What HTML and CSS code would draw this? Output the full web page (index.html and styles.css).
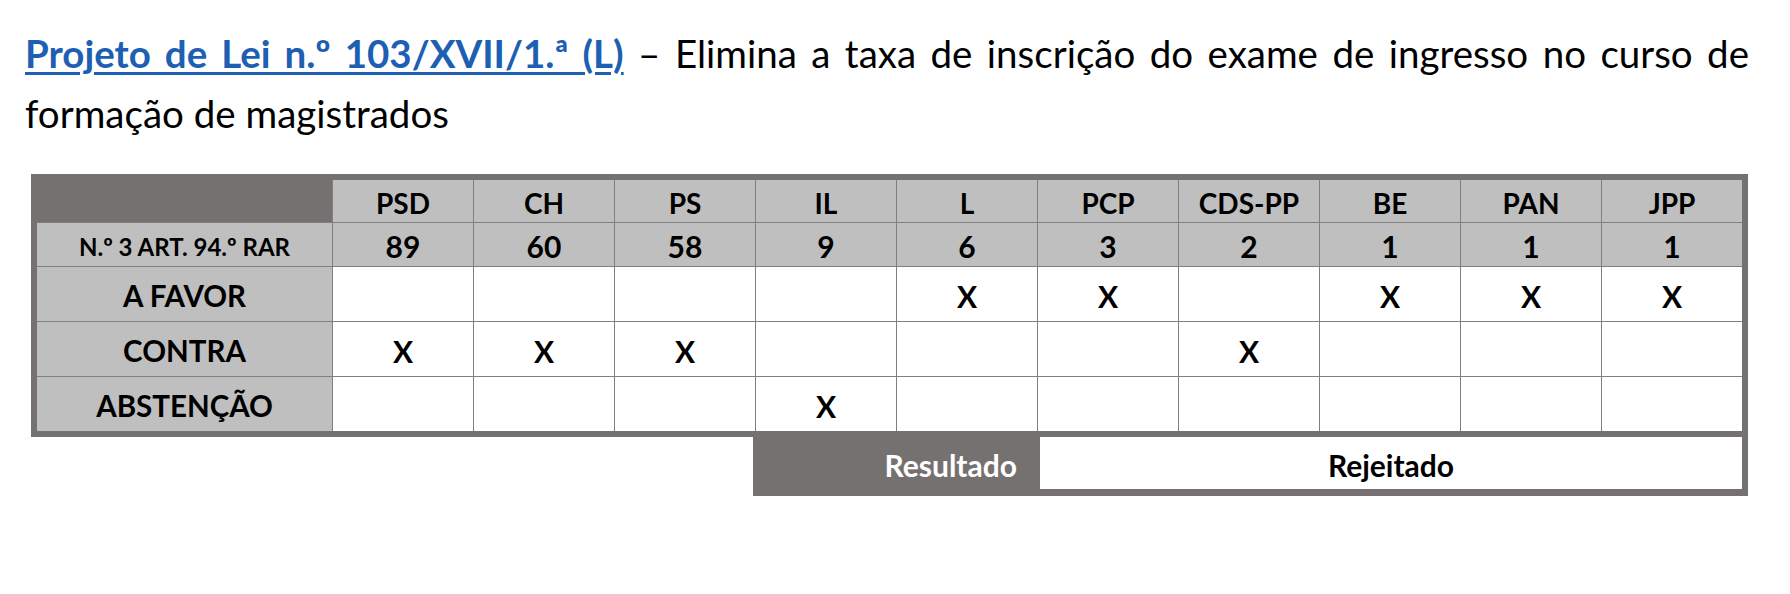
FILE: index.html
```html
<!DOCTYPE html>
<html lang="pt">
<head>
<meta charset="utf-8">
<title>Projeto de Lei n.º 103/XVII/1.ª (L)</title>
<link rel="stylesheet" href="styles.css">
</head>
<body>
<main class="page">
  <p class="title">
    <span class="title-line"><a class="title-link" href="#">Projeto de Lei n.º 103/XVII/1.ª (L)</a> – Elimina a taxa de inscrição do exame de ingresso no curso de</span>
    <span class="title-rest">formação de magistrados</span>
  </p>

  <section class="vote">
    <div class="vote-grid">
      <div class="cell corner"></div>
      <div class="cell head">PSD</div>
      <div class="cell head">CH</div>
      <div class="cell head">PS</div>
      <div class="cell head">IL</div>
      <div class="cell head">L</div>
      <div class="cell head">PCP</div>
      <div class="cell head">CDS-PP</div>
      <div class="cell head">BE</div>
      <div class="cell head">PAN</div>
      <div class="cell head">JPP</div>

      <div class="cell head label-small">N.º 3 ART. 94.º RAR</div>
      <div class="cell head num">89</div>
      <div class="cell head num">60</div>
      <div class="cell head num">58</div>
      <div class="cell head num">9</div>
      <div class="cell head num">6</div>
      <div class="cell head num">3</div>
      <div class="cell head num">2</div>
      <div class="cell head num">1</div>
      <div class="cell head num">1</div>
      <div class="cell head num">1</div>

      <div class="cell head label">A FAVOR</div>
      <div class="cell mark"></div>
      <div class="cell mark"></div>
      <div class="cell mark"></div>
      <div class="cell mark"></div>
      <div class="cell mark">X</div>
      <div class="cell mark">X</div>
      <div class="cell mark"></div>
      <div class="cell mark">X</div>
      <div class="cell mark">X</div>
      <div class="cell mark">X</div>

      <div class="cell head label">CONTRA</div>
      <div class="cell mark">X</div>
      <div class="cell mark">X</div>
      <div class="cell mark">X</div>
      <div class="cell mark"></div>
      <div class="cell mark"></div>
      <div class="cell mark"></div>
      <div class="cell mark">X</div>
      <div class="cell mark"></div>
      <div class="cell mark"></div>
      <div class="cell mark"></div>

      <div class="cell head label">ABSTENÇÃO</div>
      <div class="cell mark"></div>
      <div class="cell mark"></div>
      <div class="cell mark"></div>
      <div class="cell mark">X</div>
      <div class="cell mark"></div>
      <div class="cell mark"></div>
      <div class="cell mark"></div>
      <div class="cell mark"></div>
      <div class="cell mark"></div>
      <div class="cell mark"></div>
    </div>

    <div class="result">
      <div class="result-label">Resultado</div>
      <div class="result-value">Rejeitado</div>
    </div>
  </section>
</main>
</body>
</html>
```

FILE: styles.css
```css
* {
  box-sizing: border-box;
}

html, body {
  margin: 0;
  padding: 0;
  background: #ffffff;
}

body {
  font-family: "Lato", "Open Sans", sans-serif;
  color: #000000;
}

.page {
  padding: 23px 41px 0 25px;
}

.title {
  margin: 0;
  font-size: 38.5px;
  line-height: 60px;
  width: 1724px;
}

.title-line {
  display: block;
  text-align: justify;
  text-align-last: justify;
}

.title-rest {
  display: block;
}

.title-link {
  color: #1d5fb3;
  font-weight: 700;
  text-decoration: underline;
  text-decoration-thickness: 3px;
  text-underline-offset: 4px;
}

.vote {
  margin: 31px 0 0 6px;
  width: 1717px;
  display: flex;
  flex-direction: column;
}

.vote-grid {
  display: grid;
  grid-template-columns: 295px repeat(10, 140px);
  grid-template-rows: 42px 43px 54px 54px 54px;
  gap: 1px;
  background: #808080;
  border: 6px solid #767171;
}

.cell {
  display: flex;
  align-items: center;
  justify-content: center;
  font-weight: 700;
  background: #ffffff;
  padding-top: 3px;
}

.corner {
  background: #767171;
}

.head {
  background: #bfbfbf;
  font-size: 28px;
}

.num {
  font-size: 30px;
}

.label-small {
  font-size: 24px;
}

.label {
  font-size: 29.5px;
}

.mark {
  font-size: 30px;
}

.result {
  align-self: flex-end;
  width: 995px;
  height: 59px;
  display: grid;
  grid-template-columns: 287px 1fr;
  background: #767171;
  border-right: 6px solid #767171;
  border-bottom: 7px solid #767171;
  font-weight: 700;
  font-size: 30px;
}

.result-label {
  display: flex;
  align-items: center;
  justify-content: flex-end;
  padding: 3px 23px 0 0;
  color: #ffffff;
}

.result-value {
  display: flex;
  align-items: center;
  justify-content: center;
  padding-top: 3px;
  background: #ffffff;
}
```
